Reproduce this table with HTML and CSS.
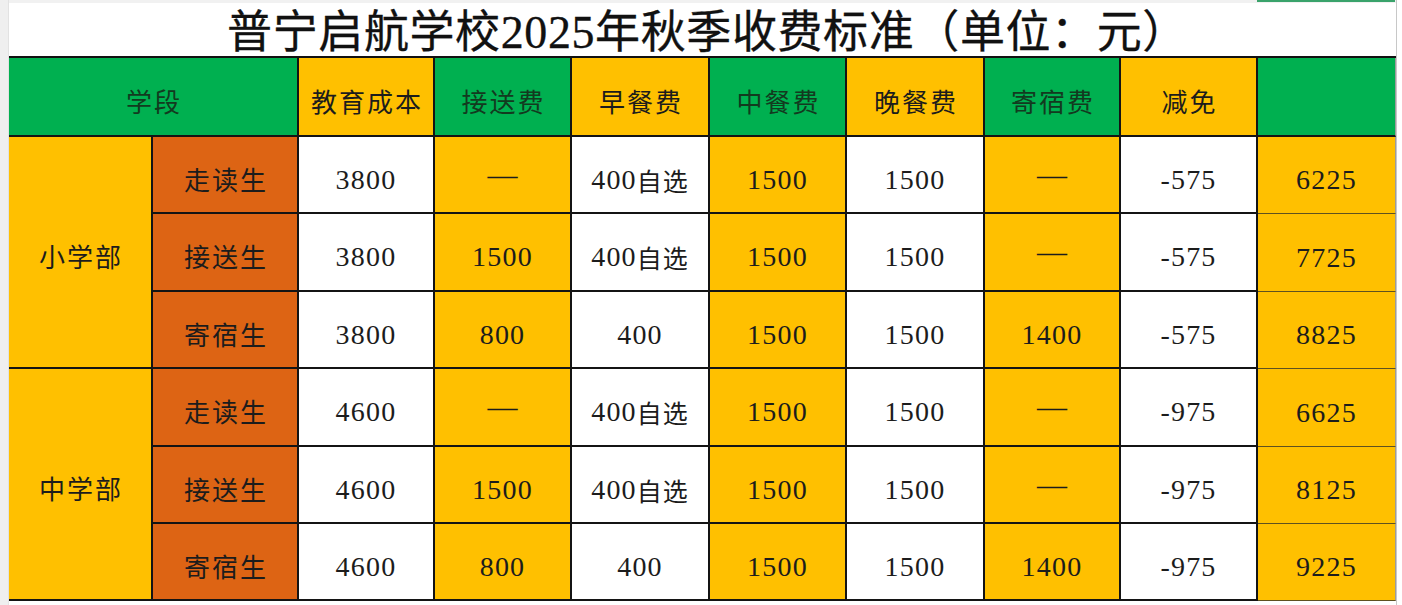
FILE: index.html
```html
<!DOCTYPE html>
<html lang="zh-CN">
<head>
<meta charset="utf-8">
<title>普宁启航学校2025年秋季收费标准</title>
<link rel="stylesheet" href="styles.css">
</head>
<body>
<div class="page">
  <div class="gutter"></div>
  <div class="sheet">
    <div class="topbar"><span class="sel"></span></div>
    <div class="title">普宁启航学校<span class="tnum">2025</span>年秋季收费标准（单位：元）</div>
    <div class="grid">
      <div class="c g h span2">学段</div>
      <div class="c y h">教育成本</div>
      <div class="c g h">接送费</div>
      <div class="c y h">早餐费</div>
      <div class="c g h">中餐费</div>
      <div class="c y h">晚餐费</div>
      <div class="c g h">寄宿费</div>
      <div class="c y h">减免</div>
      <div class="c g h last"></div>

      <div class="c y h rspan3 first">小学部</div>
      <div class="c o h">走读生</div>
      <div class="c w n">3800</div>
      <div class="c y dash">—</div>
      <div class="c w n">400<span class="cj">自选</span></div>
      <div class="c y n">1500</div>
      <div class="c w n">1500</div>
      <div class="c y dash">—</div>
      <div class="c w n">-575</div>
      <div class="c y n last">6225</div>

      <div class="c o h">接送生</div>
      <div class="c w n">3800</div>
      <div class="c y n">1500</div>
      <div class="c w n">400<span class="cj">自选</span></div>
      <div class="c y n">1500</div>
      <div class="c w n">1500</div>
      <div class="c y dash">—</div>
      <div class="c w n">-575</div>
      <div class="c y n last">7725</div>

      <div class="c o h">寄宿生</div>
      <div class="c w n">3800</div>
      <div class="c y n">800</div>
      <div class="c w n">400</div>
      <div class="c y n">1500</div>
      <div class="c w n">1500</div>
      <div class="c y n">1400</div>
      <div class="c w n">-575</div>
      <div class="c y n last">8825</div>

      <div class="c y h rspan3 first">中学部</div>
      <div class="c o h">走读生</div>
      <div class="c w n">4600</div>
      <div class="c y dash">—</div>
      <div class="c w n">400<span class="cj">自选</span></div>
      <div class="c y n">1500</div>
      <div class="c w n">1500</div>
      <div class="c y dash">—</div>
      <div class="c w n">-975</div>
      <div class="c y n last">6625</div>

      <div class="c o h">接送生</div>
      <div class="c w n">4600</div>
      <div class="c y n">1500</div>
      <div class="c w n">400<span class="cj">自选</span></div>
      <div class="c y n">1500</div>
      <div class="c w n">1500</div>
      <div class="c y dash">—</div>
      <div class="c w n">-975</div>
      <div class="c y n last">8125</div>

      <div class="c o h">寄宿生</div>
      <div class="c w n">4600</div>
      <div class="c y n">800</div>
      <div class="c w n">400</div>
      <div class="c y n">1500</div>
      <div class="c w n">1500</div>
      <div class="c y n">1400</div>
      <div class="c w n">-975</div>
      <div class="c y n last">9225</div>
    </div>
  </div>
</div>
</body>
</html>
```
FILE: styles.css
```css
html, body {
  margin: 0;
  padding: 0;
  background: #ffffff;
}

.page {
  display: flex;
  width: 1402px;
  height: 605px;
  overflow: hidden;
  background: #ffffff;
}

.gutter {
  width: 9px;
  flex: none;
  background: #efefef;
  border-right: 1px solid #e2e2e2;
  box-sizing: border-box;
}

.sheet {
  width: 1387px;
  flex: none;
  border-right: 1px solid #c8c8c8;
}

.topbar {
  height: 3px;
  background: #f1f1f1;
  display: flex;
}

.topbar .sel {
  margin-left: 1248px;
  width: 138px;
  height: 2px;
  background: #3aa36b;
}

.title {
  height: 53px;
  box-sizing: border-box;
  padding-top: 6px;
  padding-left: 10px;
  text-align: center;
  font-family: "Liberation Serif", "Noto Sans CJK SC", serif;
  font-size: 45px;
  line-height: 47px;
  letter-spacing: 0.6px;
  color: #111111;
  background: #ffffff;
  -webkit-text-stroke: 0.3px #111111;
}

.title .tnum {
  font-family: "Liberation Serif", serif;
  font-size: 46px;
}

.grid {
  display: grid;
  grid-template-columns: 144px 146px 136px 137px 138px 137px 138px 136px 137px 138px;
  grid-template-rows: 79px 77px 78px 77px 78px 77px 77px;
  border-top: 2px solid #111111;
}

.c {
  box-sizing: border-box;
  border-right: 2px solid #141414;
  border-bottom: 2px solid #141414;
  display: flex;
  align-items: center;
  justify-content: center;
  padding-top: 7px;
  color: #1c1c1c;
  white-space: nowrap;
}

.span2 { grid-column: span 2; }
.rspan3 { grid-row: span 3; }

.g { background: #00b050; }
.y { background: #ffc000; }
.w { background: #ffffff; }
.o { background: #dd6414; }

.h {
  font-family: "Noto Sans CJK SC", sans-serif;
  font-size: 26px;
  letter-spacing: 2px;
  padding-left: 2px;
}

.g.h { color: #133a1f; }

.n {
  font-family: "Liberation Serif", "Noto Sans CJK SC", serif;
  font-size: 28px;
  letter-spacing: 1.2px;
  padding-top: 10px;
}

.n .cj {
  font-family: "Noto Sans CJK SC", sans-serif;
  font-size: 25px;
  letter-spacing: 1px;
}

.dash {
  font-family: "Liberation Serif", serif;
  font-size: 30px;
  padding-top: 0;
}

.last {
  border-right: 1px solid #9c9c9c;
  border-bottom: 1px solid #5e5120;
}

.g.last {
  border-bottom: 2px solid #141414;
}
```
